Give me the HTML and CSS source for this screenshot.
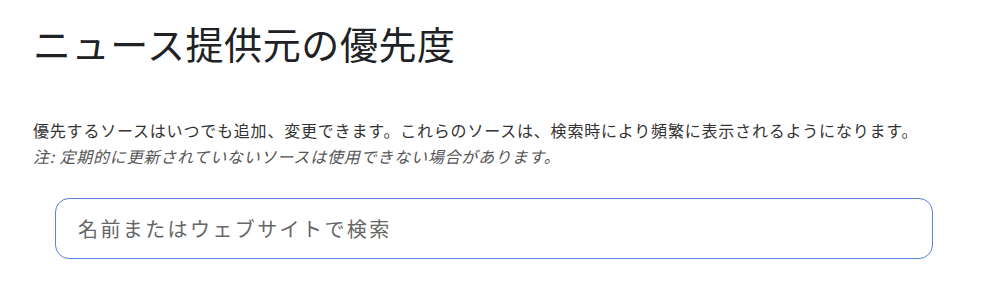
FILE: index.html
```html
<!DOCTYPE html>
<html lang="ja">
<head>
  <meta charset="UTF-8">
  <meta name="viewport" content="width=device-width, initial-scale=1.0">
  <title>ニュース提供元の優先度</title>
  <link rel="stylesheet" href="styles.css">
</head>
<body>

  <div class="page">
    <h1 class="page-title">ニュース提供元の優先度</h1>

    <div class="intro">
      <p>優先するソースはいつでも追加、変更できます。これらのソースは、検索時により頻繁に表示されるようになります。</p>
      <p class="note">注: 定期的に更新されていないソースは使用できない場合があります。</p>
    </div>

    <div class="search-box">
      <input type="text" class="search-input" placeholder="名前またはウェブサイトで検索">
    </div>
  </div>

</body>
</html>
```

FILE: styles.css
```css
body {
  font-family: "Noto Sans CJK JP", "Noto Sans", sans-serif;
  margin: 0;
  padding: 0;
  background: #fff;
  color: #202124;
}

.page {
  padding: 21px 0 0 33px;
}

.page-title {
  margin: 0;
  font-size: 38px;
  font-weight: 400;
  line-height: 44px;
  letter-spacing: 0.6px;
  color: #202124;
}

.intro {
  margin-top: 52px;
}

.intro p {
  margin: 0;
  font-size: 16px;
  line-height: 26px;
  letter-spacing: 0.8px;
  color: #333;
}

.intro .note {
  font-style: italic;
  color: #555;
}

.search-box {
  margin: 29px 0 0 22px;
  width: 878px;
}

.search-input {
  box-sizing: border-box;
  width: 100%;
  height: 61px;
  padding: 0 22px;
  border: 1px solid #5a82de;
  border-radius: 14px;
  font-family: inherit;
  font-size: 20px;
  letter-spacing: 2.4px;
  color: #333;
  outline: none;
}

.search-input::placeholder {
  color: #666;
}
```
